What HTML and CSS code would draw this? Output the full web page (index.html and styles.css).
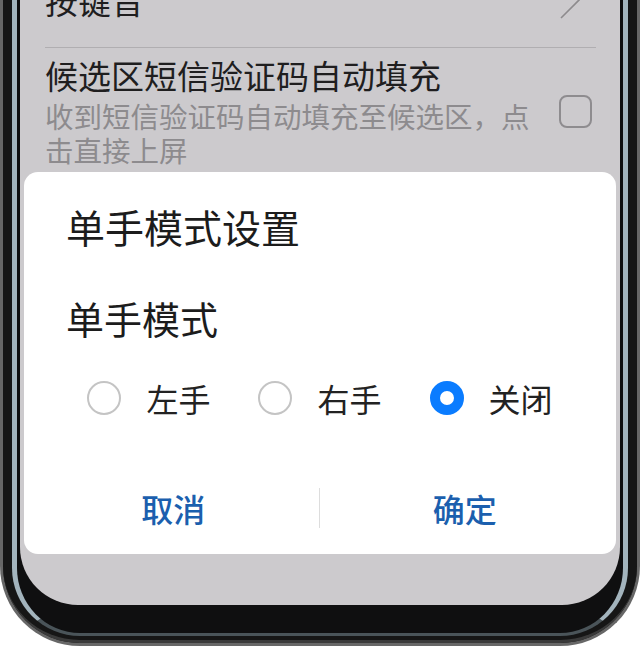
FILE: index.html
```html
<!DOCTYPE html>
<html lang="zh-CN">
<head>
<meta charset="utf-8">
<title>单手模式设置</title>
<link rel="stylesheet" href="styles.css">
</head>
<body>
<div class="phone">
  <div class="rim">
    <div class="glass">
      <div class="screen">
        <div class="list">
          <div class="row row-top">
            <span class="label">按键音</span>
            <svg class="chev" width="20" height="40" viewBox="0 0 20 40"><path d="M1 2 L19 20 L1 38" fill="none" stroke="#8d8b8d" stroke-width="1.6"/></svg>
          </div>
          <div class="row row-sms">
            <div class="text">
              <div class="title">候选区短信验证码自动填充</div>
              <div class="sub">收到短信验证码自动填充至候选区，点击直接上屏</div>
            </div>
            <span class="checkbox"></span>
          </div>
        </div>
        <div class="dialog">
          <div class="d-title">单手模式设置</div>
          <div class="d-label">单手模式</div>
          <div class="radios">
            <div class="opt"><span class="radio"></span><span>左手</span></div>
            <div class="opt"><span class="radio"></span><span>右手</span></div>
            <div class="opt"><span class="radio checked"></span><span>关闭</span></div>
          </div>
          <div class="buttons">
            <span class="btn btn-left">取消</span>
            <span class="sep"></span>
            <span class="btn btn-right">确定</span>
          </div>
        </div>
      </div>
    </div>
  </div>
</div>
</body>
</html>
```
FILE: styles.css
```css
html, body {
  margin: 0;
  padding: 0;
  background: #ffffff;
}
body {
  width: 640px;
  height: 651px;
  overflow: hidden;
  font-family: "Noto Sans CJK SC", "Noto Sans", sans-serif;
}
.phone {
  width: 640px;
  height: 646px;
  box-sizing: border-box;
  border: 3px solid #676767;
  border-top: 0;
  border-radius: 0 0 80px 80px;
  background: #1a1a1a;
}
.rim {
  height: 100%;
  box-sizing: border-box;
  padding: 0 9px 4px;
  border-radius: 0 0 77px 77px;
  background: #161616;
  border-bottom: 3px solid #3a3a3a;
}
.glass {
  height: 100%;
  box-sizing: border-box;
  border-left: 5px solid #a3b4bd;
  border-right: 5px solid #a3b4bd;
  border-bottom: 3px solid #4a5459;
  border-radius: 0 0 68px 68px;
  padding: 0 3px;
  background: #0f0f10;
}
.screen {
  position: relative;
  height: 605px;
  background: #cccacd;
  border-radius: 0 0 58px 58px;
  overflow: hidden;
}
.list {
  padding: 0 24px 0 25px;
}
.row {
  display: flex;
  align-items: center;
}
.row-top {
  height: 94px;
  margin-top: -47px;
  border-bottom: 1px solid #b0aeb1;
  justify-content: space-between;
}
.label {
  font-size: 33px;
  line-height: 44px;
  color: #1f1e1f;
}
.chev {
  display: block;
  margin-right: 16px;
}
.row-sms {
  padding-top: 5px;
  gap: 14px;
}
.text {
  width: 500px;
}
.title {
  font-size: 33px;
  line-height: 44px;
  color: #1f1e1f;
}
.sub {
  margin-top: 2px;
  font-size: 28.5px;
  line-height: 34px;
  color: #8d8b8e;
}
.checkbox {
  width: 33px;
  height: 33px;
  box-sizing: border-box;
  border: 2px solid #8e8c8f;
  border-radius: 8px;
  margin-top: 2px;
}
.dialog {
  position: absolute;
  left: 4px;
  top: 172px;
  width: 592px;
  height: 382px;
  box-sizing: border-box;
  background: #ffffff;
  border-radius: 14px;
  padding-top: 30px;
  color: #1c1c1c;
}
.d-title, .d-label {
  padding-left: 42px;
  font-size: 38px;
  line-height: 48px;
}
.d-title {
  font-size: 39px;
}
.d-label {
  margin-top: 44px;
}
.radios {
  margin-top: 36px;
  height: 40px;
  display: flex;
  justify-content: center;
  gap: 48px;
}
.opt {
  display: flex;
  align-items: center;
  gap: 25px;
  font-size: 32px;
  line-height: 40px;
  color: #222222;
}
.radio {
  width: 34px;
  height: 34px;
  box-sizing: border-box;
  border: 2px solid #c4c4c4;
  border-radius: 50%;
}
.radio.checked {
  border: 10px solid #0a7cff;
}
.buttons {
  margin-top: 70px;
  height: 40px;
  display: flex;
  align-items: center;
}
.btn {
  flex: 1;
  text-align: center;
  font-size: 32px;
  line-height: 40px;
  font-weight: 500;
  color: #1b5fae;
}
.btn-left {
  padding-left: 4px;
}
.btn-right {
  padding-right: 6px;
}
.sep {
  width: 1px;
  height: 40px;
  background: #dddddd;
}
```
